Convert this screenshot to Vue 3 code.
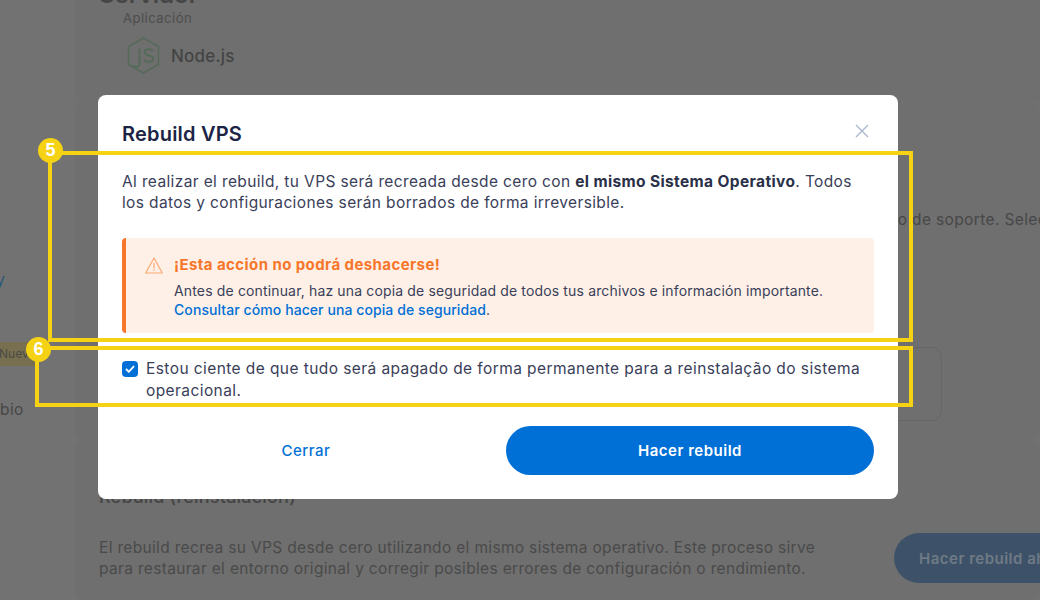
<template>
  <div class="page">
    <aside class="side">
      <span class="side-link">y</span>
      <span class="side-tag">Nuevo</span>
      <span class="side-item">bio</span>
    </aside>
    <main class="main">
      <section class="card first">
        <h2 class="heading">Servidor</h2>
        <p class="label">Aplicación</p>
        <div class="app">
          <svg class="node" width="33" height="37" viewBox="0 0 33 37" fill="none">
            <path d="M16.500 1 31.500 9.600v17.800L16.500 36 1.500 27.400V9.600Z" stroke="#566a5a" stroke-width="1.500" stroke-linejoin="round"/>
            <path d="M12.500 11.500v15c0 3.500-3.500 4-6.500 2.500" stroke="#566a5a" stroke-width="2"/>
            <path d="M26 14c-1-2-8.500-3-8.500 1.200 0 4.300 8.800 2.300 8.800 6.500 0 4-7.800 3.600-9.300 1" stroke="#566a5a" stroke-width="2"/>
          </svg>
          <span class="app-name">Node.js</span>
        </div>
      </section>
      <section class="card second">
        <p class="support">Elige el tipo de soporte. Seleccione</p>
        <div class="option"></div>
      </section>
      <section class="card third">
        <h3 class="subheading">Rebuild (reinstalación)</h3>
        <div class="rebuild-row">
          <p class="desc">El rebuild recrea su VPS desde cero utilizando el mismo sistema operativo. Este proceso sirve para restaurar el entorno original y corregir posibles errores de configuración o rendimiento.</p>
          <button class="ghost">Hacer rebuild ahora</button>
        </div>
      </section>
    </main>

    <div class="modal">
      <header class="modal-head">
        <h1 class="title">Rebuild VPS</h1>
        <svg class="close" width="14" height="14" viewBox="0 0 14 14" fill="none">
          <path d="M1 1l12 12M13 1 1 13" stroke="#a9b9cf" stroke-width="1.400"/>
        </svg>
      </header>
      <p class="intro">Al realizar el rebuild, tu VPS será recreada desde cero con <strong>el mismo Sistema Operativo</strong>. Todos<br>los datos y configuraciones serán borrados de forma irreversible.</p>
      <div class="alert">
        <svg class="warn" width="18" height="17" viewBox="0 0 18 17" fill="none">
          <path d="M9 1 17.300 16H.7Z" stroke="#fba873" stroke-width="1.200" stroke-linejoin="round"/>
          <path d="M9 6v5.500M9 12.500v1.500" stroke="#fba873" stroke-width="1.200"/>
        </svg>
        <div class="alert-body">
          <p class="alert-title">¡Esta acción no podrá deshacerse!</p>
          <p class="alert-text">Antes de continuar, haz una copia de seguridad de todos tus archivos e información importante.<br><a class="alert-link">Consultar cómo hacer una copia de seguridad</a>.</p>
        </div>
      </div>
      <label class="confirm">
        <span class="check">
          <svg width="10" height="8" viewBox="0 0 10 8" fill="none"><path d="M1 4l2.800 2.800L9 1.200" stroke="#fff" stroke-width="1.800"/></svg>
        </span>
        <span class="confirm-text">Estou ciente de que tudo será apagado de forma permanente para a reinstalação do sistema operacional.</span>
      </label>
      <footer class="actions">
        <button class="btn-text">Cerrar</button>
        <button class="btn-primary">Hacer rebuild</button>
      </footer>
    </div>

    <div class="mark box5"><span class="num n5">5</span></div>
    <div class="mark box6"><span class="num n6">6</span></div>
  </div>
</template>

<script setup>
</script>

<style>
html, body { margin: 0; overflow: hidden; }
</style>

<style scoped>
.page {
  position: relative;
  width: 1040px;
  height: 600px;
  overflow: hidden;
  display: flex;
  background: #717171;
  font-family: "Inter", "Open Sans", sans-serif;
  color: #2c3350;
}
p, h1, h2, h3 { margin: 0; }
.side {
  width: 75px;
  flex: none;
  display: flex;
  flex-direction: column;
  background: #727272;
}
.side-link { margin-top: 268px; margin-left: -4px; font-size: 16px; color: #2f5878; line-height: 22px; }
.side-tag { margin-top: 52px; width: 36px; height: 24px; background: #776f4f; color: #4b4b45; font-size: 12px; line-height: 24px; overflow: hidden; white-space: nowrap; text-indent: -1px; }
.side-item { margin-top: 33px; font-size: 15.500px; letter-spacing: .4px; line-height: 22px; color: #474747; }
.main { flex: 1; display: flex; flex-direction: column; min-width: 0; }
.card { background: #6f6f6f; border-radius: 12px; padding-left: 24px; }
.first { height: 122px; margin-top: -20px; position: relative; width: 1000px; background: #6e6f6e; }
.heading { font-size: 24px; font-weight: 600; color: #454545; line-height: 30px; }
.label { margin-left: 24px; font-size: 13px; letter-spacing: .5px; line-height: 16px; color: #4d4d4d; }
.app { margin: 11px 0 0 28px; display: flex; align-items: center; gap: 11px; }
.app-name { font-size: 17px; font-weight: 500; letter-spacing: .2px; color: #444; }
.second { height: 338px; position: relative; }
.support { position: absolute; left: 743px; top: 107px; font-size: 15.500px; letter-spacing: .37px; line-height: 22px; color: #474747; white-space: nowrap; }
.option { position: absolute; left: 600px; top: 245px; width: 265px; height: 72px; border: 1px solid #666; border-radius: 10px; }
.third { flex: 1; padding-top: 46px; }
.subheading { font-size: 18px; font-weight: 500; letter-spacing: .2px; color: #454545; line-height: 22px; }
.rebuild-row { margin-top: 25px; display: flex; align-items: center; gap: 65px; width: 1000px; }
.desc { width: 730px; flex: none; font-size: 15.500px; letter-spacing: .33px; line-height: 21px; color: #4a4a4a; }
.ghost { flex: none; height: 50px; padding: 0 25px; border: 0; border-radius: 25px; background: #3d5269; color: #6f7a85; font: 600 15px "Inter", sans-serif; letter-spacing: .5px; white-space: nowrap; }

.modal {
  position: absolute;
  left: 98px;
  top: 95px;
  width: 800px;
  height: 404px;
  box-sizing: border-box;
  padding: 24px;
  background: #fff;
  border-radius: 8px;
  display: flex;
  flex-direction: column;
}
.modal-head { display: flex; justify-content: space-between; align-items: center; height: 28px; }
.title { font-size: 20px; font-weight: 600; letter-spacing: .2px; line-height: 28px; margin-top: 2px; color: #1c2446; }
.close { margin-right: 5px; margin-top: -4px; }
.intro { margin-top: 24px; font-size: 15.500px; letter-spacing: .37px; line-height: 21px; color: #3a4059; }
.intro strong { font-weight: 700; color: #2a3048; }
.alert {
  margin-top: 25px;
  box-sizing: border-box;
  height: 95px;
  display: flex;
  gap: 11px;
  padding: 16px 16px 0 19px;
  background: #fef0e6;
  border-left: 4px solid #f6762a;
  border-radius: 4px;
}
.warn { margin-top: 3px; flex: none; }
.alert-title { font-size: 15px; font-weight: 700; letter-spacing: .42px; line-height: 22px; color: #f6762a; }
.alert-text { margin-top: 5px; font-size: 14px; letter-spacing: .15px; line-height: 19px; color: #3a4059; }
.alert-link { color: #006fd6; font-weight: 500; letter-spacing: .08px; }
.confirm { margin-top: 17px; display: flex; gap: 8px; }
.check {
  flex: none;
  width: 16px;
  height: 16px;
  margin-top: 11px;
  background: #006fd6;
  border-radius: 4px;
  display: flex;
  align-items: center;
  justify-content: center;
}
.confirm-text { padding-top: 8px; font-size: 15.500px; letter-spacing: .42px; line-height: 22px; color: #3a4059; }
.actions { margin-top: auto; display: flex; }
.btn-text { width: 368px; height: 49px; border: 0; background: none; color: #006fd6; font: 500 15px "Inter", sans-serif; letter-spacing: .5px; }
.btn-primary { margin-left: 16px; width: 368px; height: 49px; border: 0; border-radius: 25px; background: #006fd6; color: #fff; font: 600 15px "Inter", sans-serif; letter-spacing: .5px; }

.mark { position: absolute; box-sizing: border-box; border: 4px solid #f5d213; pointer-events: none; }
.box5 { left: 48px; top: 151px; width: 865px; height: 191px; }
.box6 { left: 35px; top: 346px; width: 878px; height: 61px; }
.num {
  position: absolute;
  width: 25px;
  height: 25px;
  border-radius: 50%;
  background: #f5d213;
  color: #fff;
  font: 700 18px/25px "Liberation Sans", sans-serif;
  text-align: center;
}
.n5 { left: -14px; top: -17px; }
.n6 { left: -13px; top: -13px; }
</style>
